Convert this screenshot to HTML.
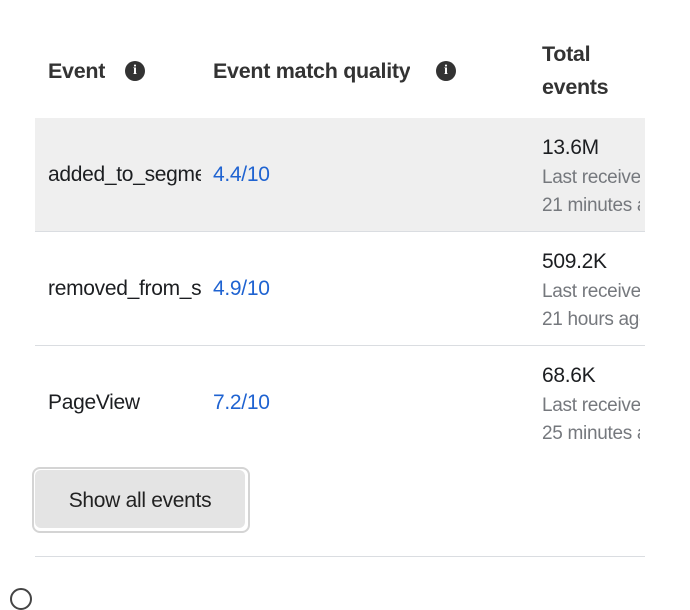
<!DOCTYPE html>
<html><head><style>
body{margin:0;width:690px;height:592px;background:#fff;font-family:"Liberation Sans",sans-serif;position:relative;overflow:hidden;color:#1c1e21}
.a{position:absolute;white-space:nowrap;overflow:hidden}
.h{font-weight:bold;font-size:21.5px;color:#333;letter-spacing:-0.3px}
.ic{position:absolute;width:20px;height:20px;border-radius:50%;background:#333;color:#fff;font:bold 14px "Liberation Serif",serif;text-align:center;line-height:20px}
.row{position:absolute;left:35px;width:610px;border-bottom:1px solid #dadde1}
.t{font-size:21px;color:#1c1e21;letter-spacing:-0.3px}
.b{font-size:21px;color:#1f63d1;letter-spacing:-0.3px}
.g{font-size:19px;color:#75787d;line-height:28px;letter-spacing:-0.3px}
</style></head><body>
<div class="a h" style="left:48px;top:59px">Event</div>
<div class="ic" style="left:125px;top:61px">i</div>
<div class="a h" style="left:213px;top:59px">Event match quality</div>
<div class="ic" style="left:436px;top:61px">i</div>
<div class="a h" style="left:542px;top:38px;line-height:33px">Total<br>events</div>

<div class="row" style="top:118px;height:113px;background:#efefef"></div>
<div class="row" style="top:232px;height:113px"></div>
<div class="row" style="top:346px;height:112px;border:none"></div>

<div class="a t" style="left:48px;top:163px;width:153px">added_to_segment</div>
<div class="a b" style="left:213px;top:163px">4.4/10</div>
<div class="a t" style="left:542px;top:136px;width:98px">13.6M</div>
<div class="a g" style="left:542px;top:164px;width:98px">Last received<br>21 minutes ago</div>

<div class="a t" style="left:48px;top:277px;width:153px">removed_from_segment</div>
<div class="a b" style="left:213px;top:277px">4.9/10</div>
<div class="a t" style="left:542px;top:250px;width:98px">509.2K</div>
<div class="a g" style="left:542px;top:278px;width:98px">Last received<br>21 hours ago</div>

<div class="a t" style="left:48px;top:391px;width:153px">PageView</div>
<div class="a b" style="left:213px;top:391px">7.2/10</div>
<div class="a t" style="left:542px;top:364px;width:98px">68.6K</div>
<div class="a g" style="left:542px;top:392px;width:98px">Last received<br>25 minutes ago</div>

<div style="position:absolute;left:32px;top:467px;width:214px;height:62px;border:2px solid #d4d4d4;border-radius:8px;background:#fff"></div>
<div style="position:absolute;left:35px;top:470px;width:210px;height:58px;border-radius:6px;background:#e4e4e4;font-size:21px;letter-spacing:-0.3px;color:#222;text-align:center;line-height:62px">Show all events</div>

<div style="position:absolute;left:35px;top:556px;width:610px;height:1px;background:#dadde1"></div>
<div style="position:absolute;left:10px;top:588px;width:22px;height:22px;border:2px solid #444;border-radius:50%;box-sizing:border-box"></div>
</body></html>
